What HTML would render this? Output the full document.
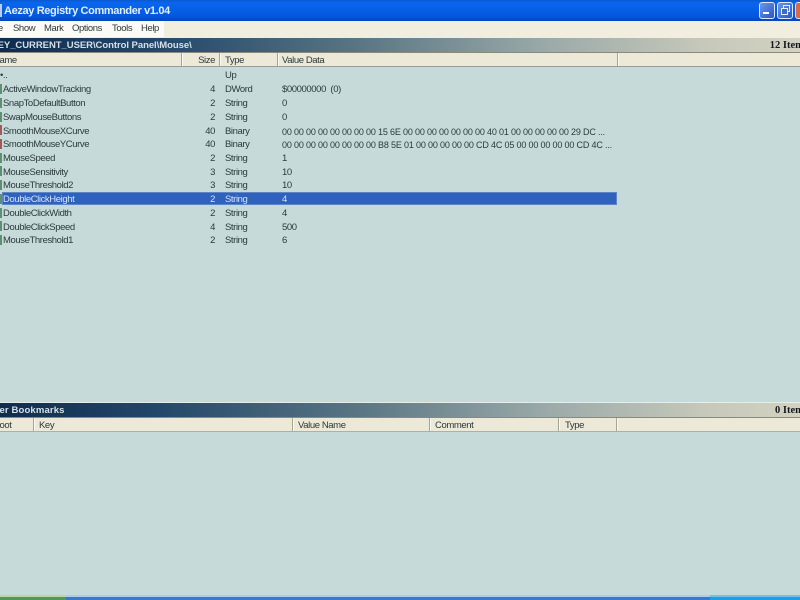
<!DOCTYPE html>
<html>
<head>
<meta charset="utf-8">
<style>
html,body{margin:0;padding:0;width:800px;height:600px;overflow:hidden;background:#c6dada;}
body{position:relative;font-family:"Liberation Sans",sans-serif;font-size:9.5px;letter-spacing:-.4px;color:#2c3a3a;}
.a{position:absolute;white-space:nowrap;}
.t{position:absolute;white-space:nowrap;height:14px;line-height:14px;margin-top:1px;}
.r{text-align:right;}
.hd{position:absolute;left:0;width:800px;background:#ece9d8;}
.sep{position:absolute;width:1px;background:#a5a596;box-shadow:1px 0 0 #fbfaf2;}
.ic{position:absolute;left:0;width:2px;height:10px;background:#5f8f72;}
.hx{font-size:9px;letter-spacing:-.17px;}
</style>
</head>
<body>
<!-- title bar -->
<div class="a" style="left:0;top:0;width:800px;height:21px;background:linear-gradient(180deg,#0a5ad0 0,#0a66ee 3px,#0560e6 10px,#0355dc 17px,#0346b8 21px);"></div>
<div class="a" style="left:0;top:4px;width:2px;height:13px;background:#b9cfe8;"></div>
<div class="a" style="left:4px;top:4px;font-weight:bold;font-size:11px;line-height:15px;color:#e4eefa;letter-spacing:-.36px;">Aezay Registry Commander v1.04</div>
<!-- window buttons -->
<div class="a" style="left:759px;top:2px;width:14px;height:15px;border:1px solid #dfe9f8;border-radius:3px;background:linear-gradient(135deg,#6d97ea,#2a55c8);"></div>
<div class="a" style="left:763px;top:12px;width:6px;height:2px;background:#fff;"></div>
<div class="a" style="left:777px;top:2px;width:14px;height:15px;border:1px solid #dfe9f8;border-radius:3px;background:linear-gradient(135deg,#6d97ea,#2a55c8);"></div>
<div class="a" style="left:783px;top:5px;width:5px;height:5px;border:1px solid #e8f0fb;"></div>
<div class="a" style="left:781px;top:8px;width:5px;height:5px;border:1px solid #e8f0fb;background:#3d68d2;"></div>
<div class="a" style="left:795px;top:2px;width:8px;height:15px;border:1px solid #e8dcd4;border-radius:3px;background:#d9694a;"></div>
<!-- menu -->
<div class="hd" style="top:21px;height:17px;background:#f1eee0;"></div>
<div class="a" style="left:0;top:21px;width:164px;height:16px;background:#fbfaf6;"></div>
<div class="t" style="left:-11px;top:21px;">File</div>
<div class="t" style="left:13px;top:21px;">Show</div>
<div class="t" style="left:44px;top:21px;">Mark</div>
<div class="t" style="left:72px;top:21px;">Options</div>
<div class="t" style="left:112px;top:21px;">Tools</div>
<div class="t" style="left:141px;top:21px;">Help</div>
<!-- path bar -->
<div class="a" style="left:0;top:38px;width:800px;height:14px;background:linear-gradient(90deg,#0f2c4e 0,#24486a 20%,#5a7684 45%,#9aa9a8 68%,#c6c8ba 88%,#d3d2c2 100%);border-bottom:1px solid #8a8a7c;"></div>
<div class="t" style="left:-16px;top:38px;font-weight:bold;font-size:9.5px;letter-spacing:-.05px;color:#d5e0e8;">HKEY_CURRENT_USER\Control Panel\Mouse\</div>
<div class="t r" style="right:-8px;top:38px;font-family:'Liberation Serif',serif;font-weight:bold;font-size:10.5px;letter-spacing:0;color:#15181c;">12 Items</div>
<!-- header 1 -->
<div class="hd" style="top:53px;height:13px;border-bottom:1px solid #9c9c8e;"></div>
<div class="sep" style="left:181px;top:53px;height:13px;"></div>
<div class="sep" style="left:219px;top:53px;height:13px;"></div>
<div class="sep" style="left:277px;top:53px;height:13px;"></div>
<div class="sep" style="left:617px;top:53px;height:13px;"></div>
<div class="t" style="left:-7px;top:53px;">Name</div>
<div class="t r" style="right:585px;top:53px;">Size</div>
<div class="t" style="left:225px;top:53px;">Type</div>
<div class="t" style="left:282px;top:53px;">Value Data</div>

<!-- selection -->
<div class="a" style="left:2px;top:192px;width:615px;height:13px;background:#2f62bd;border:0;box-shadow:inset 0 0 0 1px #5f85c8;"></div>

<!-- rows -->
<div class="a" style="left:0;top:0;width:800px;height:0;">
<div class="t" style="left:0;top:68px;">&#8226;..</div><div class="t" style="left:225px;top:68px;">Up</div>

<div class="ic" style="top:84px;"></div><div class="t" style="left:3px;top:82px;">ActiveWindowTracking</div><div class="t r" style="right:585px;top:82px;">4</div><div class="t" style="left:225px;top:82px;">DWord</div><div class="t" style="left:282px;top:82px;">$00000000&nbsp; (0)</div>

<div class="ic" style="top:98px;"></div><div class="t" style="left:3px;top:96px;">SnapToDefaultButton</div><div class="t r" style="right:585px;top:96px;">2</div><div class="t" style="left:225px;top:96px;">String</div><div class="t" style="left:282px;top:96px;">0</div>

<div class="ic" style="top:112px;"></div><div class="t" style="left:3px;top:110px;">SwapMouseButtons</div><div class="t r" style="right:585px;top:110px;">2</div><div class="t" style="left:225px;top:110px;">String</div><div class="t" style="left:282px;top:110px;">0</div>

<div class="ic" style="top:125px;background:#a05a5a;"></div><div class="t" style="left:3px;top:124px;">SmoothMouseXCurve</div><div class="t r" style="right:585px;top:124px;">40</div><div class="t" style="left:225px;top:124px;">Binary</div><div class="t hx" style="left:282px;top:124px;">00 00 00 00 00 00 00 00 15 6E 00 00 00 00 00 00 00 40 01 00 00 00 00 00 29 DC ...</div>

<div class="ic" style="top:139px;background:#a05a5a;"></div><div class="t" style="left:3px;top:137px;">SmoothMouseYCurve</div><div class="t r" style="right:585px;top:137px;">40</div><div class="t" style="left:225px;top:137px;">Binary</div><div class="t hx" style="left:282px;top:137px;">00 00 00 00 00 00 00 00 B8 5E 01 00 00 00 00 00 CD 4C 05 00 00 00 00 00 CD 4C ...</div>

<div class="ic" style="top:153px;"></div><div class="t" style="left:3px;top:151px;">MouseSpeed</div><div class="t r" style="right:585px;top:151px;">2</div><div class="t" style="left:225px;top:151px;">String</div><div class="t" style="left:282px;top:151px;">1</div>

<div class="ic" style="top:166px;"></div><div class="t" style="left:3px;top:165px;">MouseSensitivity</div><div class="t r" style="right:585px;top:165px;">3</div><div class="t" style="left:225px;top:165px;">String</div><div class="t" style="left:282px;top:165px;">10</div>

<div class="ic" style="top:180px;"></div><div class="t" style="left:3px;top:178px;">MouseThreshold2</div><div class="t r" style="right:585px;top:178px;">3</div><div class="t" style="left:225px;top:178px;">String</div><div class="t" style="left:282px;top:178px;">10</div>

<div class="ic" style="top:194px;"></div><div class="t" style="left:3px;top:192px;color:#d5e2f2;">DoubleClickHeight</div><div class="t r" style="right:585px;top:192px;color:#d5e2f2;">2</div><div class="t" style="left:225px;top:192px;color:#d5e2f2;">String</div><div class="t" style="left:282px;top:192px;color:#d5e2f2;">4</div>

<div class="ic" style="top:208px;"></div><div class="t" style="left:3px;top:206px;">DoubleClickWidth</div><div class="t r" style="right:585px;top:206px;">2</div><div class="t" style="left:225px;top:206px;">String</div><div class="t" style="left:282px;top:206px;">4</div>

<div class="ic" style="top:221px;"></div><div class="t" style="left:3px;top:220px;">DoubleClickSpeed</div><div class="t r" style="right:585px;top:220px;">4</div><div class="t" style="left:225px;top:220px;">String</div><div class="t" style="left:282px;top:220px;">500</div>

<div class="ic" style="top:235px;"></div><div class="t" style="left:3px;top:233px;">MouseThreshold1</div><div class="t r" style="right:585px;top:233px;">2</div><div class="t" style="left:225px;top:233px;">String</div><div class="t" style="left:282px;top:233px;">6</div>
</div>

<!-- bookmarks bar -->
<div class="a" style="left:0;top:402px;width:800px;height:1px;background:#e6eeec;"></div>
<div class="a" style="left:0;top:403px;width:800px;height:14px;background:linear-gradient(90deg,#0f2c4e 0,#24486a 20%,#5a7684 45%,#9aa9a8 68%,#c6c8ba 88%,#d3d2c2 100%);border-bottom:1px solid #8a8a7c;"></div>
<div class="t" style="left:-13px;top:403px;font-weight:bold;font-size:9.5px;letter-spacing:.15px;color:#d5e0e8;">User Bookmarks</div>
<div class="t r" style="right:-8px;top:403px;font-family:'Liberation Serif',serif;font-weight:bold;font-size:10.5px;letter-spacing:0;color:#15181c;">0 Items</div>
<!-- header 2 -->
<div class="hd" style="top:418px;height:13px;border-bottom:1px solid #b0b0a2;"></div>
<div class="sep" style="left:33px;top:418px;height:13px;"></div>
<div class="sep" style="left:292px;top:418px;height:13px;"></div>
<div class="sep" style="left:429px;top:418px;height:13px;"></div>
<div class="sep" style="left:558px;top:418px;height:13px;"></div>
<div class="sep" style="left:616px;top:418px;height:13px;"></div>
<div class="t" style="left:-7px;top:418px;">Root</div>
<div class="t" style="left:39px;top:418px;">Key</div>
<div class="t" style="left:298px;top:418px;">Value Name</div>
<div class="t" style="left:435px;top:418px;">Comment</div>
<div class="t" style="left:565px;top:418px;">Type</div>

<!-- taskbar strip -->
<div class="a" style="left:0;top:595px;width:800px;height:2px;background:#a9cdec;"></div>
<div class="a" style="left:0;top:597px;width:800px;height:3px;background:#3a78cf;"></div>
<div class="a" style="left:0;top:595px;width:66px;height:2px;background:#b4d8a0;"></div>
<div class="a" style="left:0;top:597px;width:66px;height:3px;background:#4f9a55;"></div>
<div class="a" style="left:710px;top:597px;width:90px;height:3px;background:#1f9fe0;"></div>
<div class="a" style="left:710px;top:595px;width:90px;height:2px;background:#6cc0ea;"></div>
</body>
</html>
